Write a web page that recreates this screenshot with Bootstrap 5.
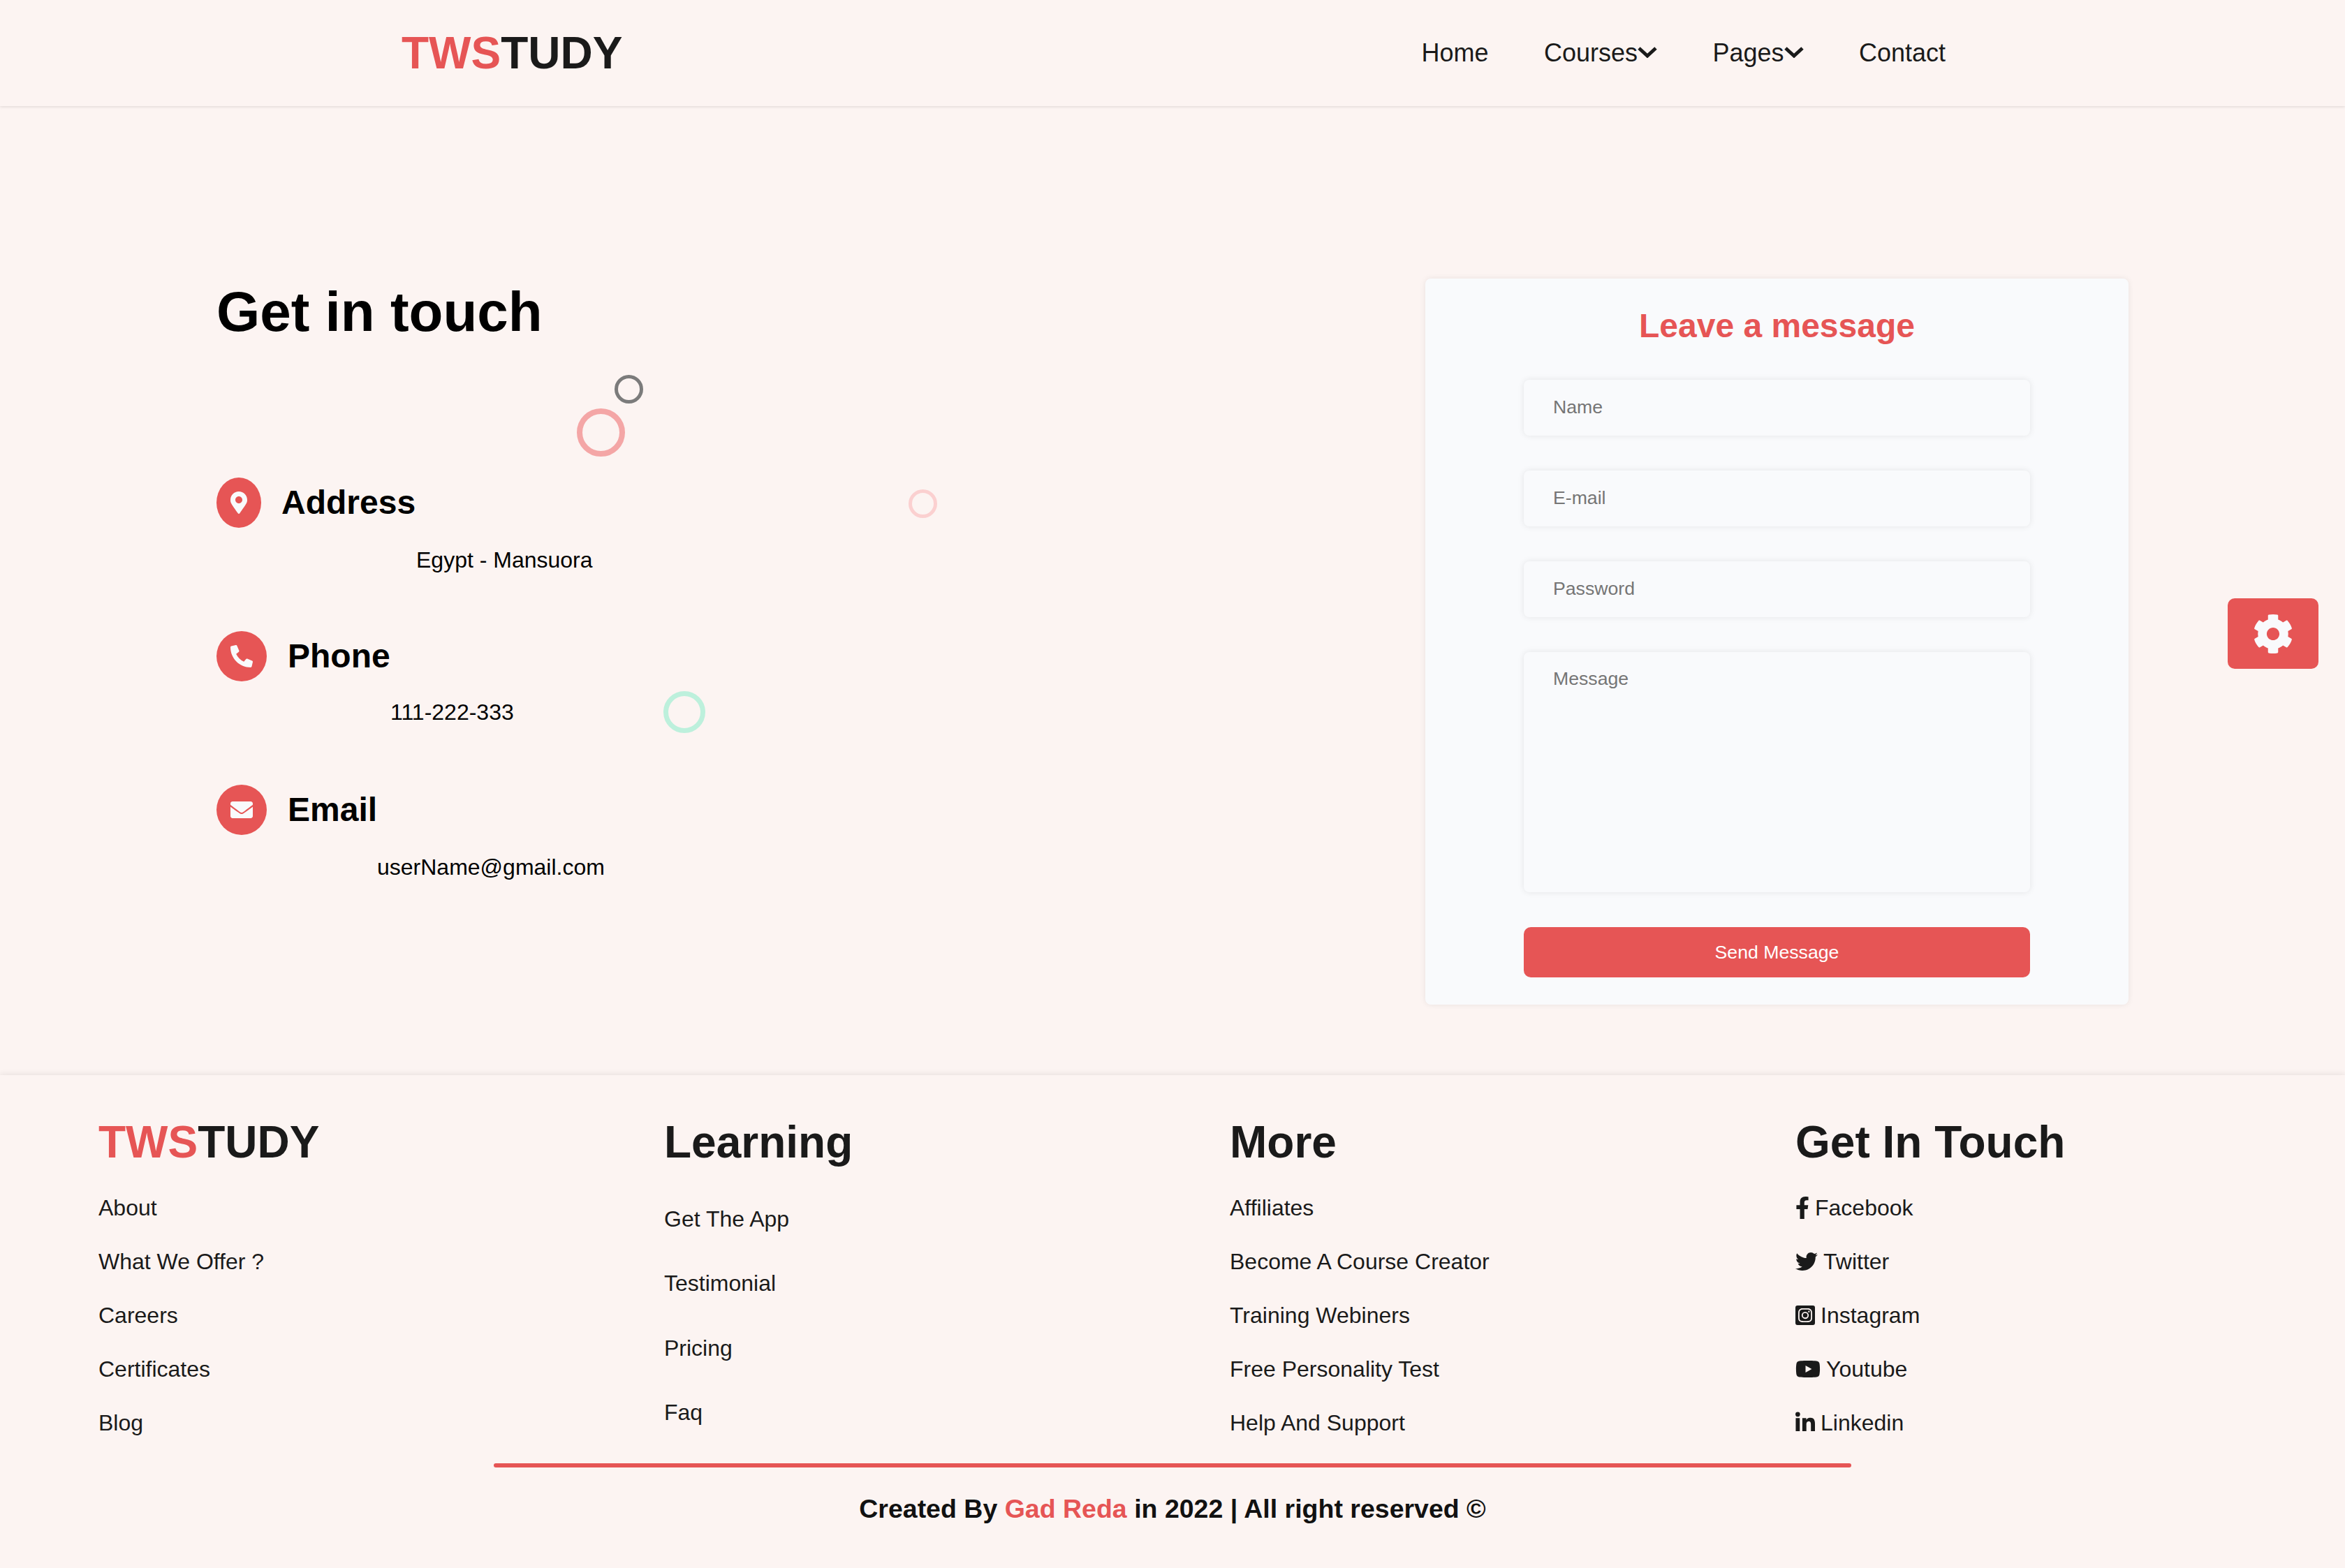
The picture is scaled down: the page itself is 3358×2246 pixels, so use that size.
<!DOCTYPE html>
<html lang="en">
<head>
    <meta charset="UTF-8">
    <meta name="viewport" content="width=device-width, initial-scale=1.0">
    <title>TWSTUDY - Contact</title>
    <link href="https://cdn.jsdelivr.net/npm/bootstrap@5.3.0/dist/css/bootstrap.min.css" rel="stylesheet">
    <style>
        body {
            font-family: "Liberation Sans", Arial, sans-serif;
            background-color: #fcf4f2;
            color: #1a1a1a;
            font-size: 32px;
            line-height: 1.5;
        }
        a { color: inherit; text-decoration: none; }
        ul { list-style: none; padding: 0; margin: 0; }
        .accent { color: #e65555; }

        /* header */
        .site-head {
            height: 152px;
            padding: 0 572px 0 575px;
            background-color: #fcf4f2;
            box-shadow: 0 1px 4px rgba(0, 0, 0, .12);
        }
        .site-logo {
            font-size: 64px;
            font-weight: 700;
            line-height: 1.2;
            color: #1a1a1a;
            padding: 0;
            margin: 0;
        }
        .site-logo:hover { color: #1a1a1a; }
        .head-links { gap: 79.4px; font-size: 36px; }
        .head-links .nav-link { padding: 0; color: #1a1a1a; display: flex; align-items: center; }
        .head-chev { width: 28px; height: 16px; margin-top: -3px; }

        /* contact */
        .contact-area {
            padding: 247px 310px 101px 310px;
        }
        .touch-title { font-size: 80px; font-weight: 700; line-height: 1.2; color: #000; margin: 0 0 189px; }
        .info-item { margin-bottom: 78px; color: #000; }
        .info-item.item-phone { margin-bottom: 80px; }
        .info-head { gap: 29px; }
        .info-head.head-wide { gap: 30px; }
        .info-head h3 { font-size: 48px; font-weight: 700; line-height: 1.2; margin: 0; }
        .info-dot {
            padding: 20px;
            border-radius: 50%;
            background-color: #e65555;
        }
        .info-dot svg { display: block; height: 32px; fill: #f9fafc; }
        .info-text { margin: 22px 0 0; }
        .offset-addr { padding-left: 286px; }
        .info-text.offset-phone { padding-left: 249px; margin-top: 20px; }
        .offset-mail { padding-left: 230px; }

        .ring { position: absolute; border-style: solid; border-radius: 50%; }
        .ring-gray { left: 880px; top: 385px; width: 41px; height: 41px; border-width: 5px; border-color: #7b7b7b; }
        .ring-rose { left: 826px; top: 433px; width: 69px; height: 69px; border-width: 8px; border-color: #f4a6a6; }
        .ring-pale { left: 1301px; top: 549px; width: 41px; height: 41px; border-width: 5px; border-color: #fbd0d0; }
        .ring-mint { left: 950px; top: 838px; width: 60px; height: 60px; border-width: 7px; border-color: #bdf0dc; }

        .msg-card {
            width: 1007px;
            background-color: #f9fafc;
            border: 0;
            border-radius: 8px;
            box-shadow: 0 0 8px rgba(0, 0, 0, .08);
        }
        .msg-card .card-body { padding: 39px 141px; }
        .msg-title { font-size: 48px; font-weight: 700; line-height: 1.2; margin: 0 0 48px; }
        .msg-field {
            height: 80px;
            margin-bottom: 50px;
            padding: 0 42px;
            font-size: 26.67px;
            background-color: #f9fafc;
            border: 0;
            border-radius: 8px;
            box-shadow: 0 0 10px rgba(0, 0, 0, .09);
        }
        .msg-field::placeholder { color: #757575; opacity: 1; }
        textarea.msg-field { height: 344px; padding: 22px 42px; resize: none; min-height: 0; line-height: 1.2; }
        .msg-send {
            display: block;
            width: 100%;
            height: 72px;
            padding: 0;
            font-size: 26.67px;
            color: #fff;
            background-color: #e65555;
            border: 0;
            border-radius: 10px;
        }
        .gear-btn {
            position: fixed;
            top: 857px;
            right: 38px;
            width: 130px;
            height: 101px;
            background-color: #e65555;
            border-radius: 10px;
        }
        .gear-btn svg { width: 58px; height: 58px; fill: #f9fafc; }

        /* footer */
        .site-foot {
            padding: 58px 0 0;
            height: 706px;
            box-shadow: 0 -2px 8px rgba(0, 0, 0, .08);
        }
        .foot-cols {
            display: grid;
            grid-template-columns: repeat(4, 1fr);
            column-gap: 165px;
            padding: 0 142px 0 141px;
        }
        .foot-cols h2 { font-size: 64px; font-weight: 700; line-height: 1.2; margin: 0 0 32px; }
        .foot-list li { margin-bottom: 28.8px; }
        .foot-list a { display: flex; align-items: center; gap: 8px; }
        .foot-list svg { height: 32px; fill: #1a1a1a; flex: none; }
        .foot-wide { padding-top: 15.5px; }
        .foot-wide li { margin-bottom: 44.5px; }
        .foot-rule {
            height: 6px;
            margin: 4px 707px 0;
            background-color: #e65555;
            border-radius: 3px;
            opacity: 1;
            border: 0;
        }
        .foot-note { font-size: 37.5px; font-weight: 700; margin: 0; padding-top: 31px; color: #111; }
    </style>
</head>
<body>
    <nav class="navbar site-head d-flex justify-content-between align-items-center">
        <a class="navbar-brand site-logo" href="#"><span class="accent">TWS</span>TUDY</a>
        <ul class="navbar-nav flex-row head-links">
            <li class="nav-item"><a class="nav-link" href="#">Home</a></li>
            <li class="nav-item"><a class="nav-link" href="#">Courses<svg class="head-chev" viewBox="0 0 28 16"><path d="M2 2l12 11L26 2" fill="none" stroke="#1a1a1a" stroke-width="5"/></svg></a></li>
            <li class="nav-item"><a class="nav-link" href="#">Pages<svg class="head-chev" viewBox="0 0 28 16"><path d="M2 2l12 11L26 2" fill="none" stroke="#1a1a1a" stroke-width="5"/></svg></a></li>
            <li class="nav-item"><a class="nav-link" href="#">Contact</a></li>
        </ul>
    </nav>

    <main class="contact-area position-relative d-flex justify-content-between align-items-start">
        <span class="ring ring-gray"></span>
        <span class="ring ring-rose"></span>
        <span class="ring ring-pale"></span>
        <span class="ring ring-mint"></span>

        <section>
            <h1 class="touch-title">Get in touch</h1>

            <div class="info-item">
                <div class="info-head d-flex align-items-center">
                    <span class="info-dot"><svg viewBox="0 0 384 512"><path d="M172.268 501.67C26.97 291.031 0 268.413 0 192 0 85.961 85.961 0 192 0s192 85.961 192 192c0 76.413-26.97 99.031-172.268 309.67-9.535 13.774-29.93 13.773-39.464 0zM192 272c44.183 0 80-35.817 80-80s-35.817-80-80-80-80 35.817-80 80 35.817 80 80 80z"/></svg></span>
                    <h3>Address</h3>
                </div>
                <p class="info-text offset-addr">Egypt - Mansuora</p>
            </div>

            <div class="info-item item-phone">
                <div class="info-head head-wide d-flex align-items-center">
                    <span class="info-dot"><svg viewBox="0 0 512 512"><path d="M497.39 361.8l-112-48a24 24 0 0 0-28 6.9l-49.6 60.6A370.66 370.66 0 0 1 130.6 204.11l60.6-49.6a23.94 23.94 0 0 0 6.9-28l-48-112A24.16 24.16 0 0 0 122.6.61l-104 24A24 24 0 0 0 0 48c0 256.5 207.9 464 464 464a24 24 0 0 0 23.4-18.6l24-104a24.29 24.29 0 0 0-14.01-27.6z"/></svg></span>
                    <h3>Phone</h3>
                </div>
                <p class="info-text offset-phone">111-222-333</p>
            </div>

            <div class="info-item">
                <div class="info-head head-wide d-flex align-items-center">
                    <span class="info-dot"><svg viewBox="0 0 512 512"><path d="M502.3 190.8c3.9-3.1 9.7-.2 9.7 4.7V400c0 26.5-21.5 48-48 48H48c-26.5 0-48-21.5-48-48V195.6c0-5 5.7-7.8 9.7-4.7 22.4 17.4 52.1 39.5 154.1 113.6 21.1 15.4 56.7 47.8 92.2 47.6 35.7.3 72-32.8 92.3-47.6 102-74.1 131.6-96.3 154-113.7zM256 320c23.2.4 56.6-29.2 73.4-41.4 132.7-96.3 142.8-104.7 173.4-128.7 5.8-4.5 9.2-11.5 9.2-18.9v-19c0-26.5-21.5-48-48-48H48C21.5 64 0 85.5 0 112v19c0 7.4 3.4 14.3 9.2 18.9 30.6 23.9 40.7 32.4 173.4 128.7 16.8 12.2 50.2 41.8 73.4 41.4z"/></svg></span>
                    <h3>Email</h3>
                </div>
                <p class="info-text offset-mail">userName@gmail.com</p>
            </div>
        </section>

        <div class="card msg-card">
            <form class="card-body">
                <h2 class="msg-title accent text-center">Leave a message</h2>
                <input class="form-control msg-field" type="text" placeholder="Name">
                <input class="form-control msg-field" type="email" placeholder="E-mail">
                <input class="form-control msg-field" type="password" placeholder="Password">
                <textarea class="form-control msg-field" placeholder="Message"></textarea>
                <button class="btn msg-send" type="button">Send Message</button>
            </form>
        </div>
    </main>

    <a class="gear-btn d-flex align-items-center justify-content-center" href="#"><svg viewBox="0 0 512 512"><path d="M487.4 315.7l-42.6-24.6c4.3-23.2 4.3-47 0-70.2l42.6-24.6c4.9-2.8 7.1-8.6 5.5-14-11.1-35.6-30-67.8-54.7-94.6-3.8-4.1-10-5.1-14.8-2.3L380.8 110c-17.9-15.4-38.5-27.3-60.8-35.1V25.8c0-5.6-3.9-10.5-9.4-11.7-36.7-8.2-74.3-7.8-109.2 0-5.5 1.2-9.4 6.1-9.4 11.7V75c-22.2 7.9-42.8 19.8-60.8 35.1L88.7 85.5c-4.9-2.8-11-1.9-14.8 2.3-24.7 26.7-43.6 58.9-54.7 94.6-1.7 5.4.6 11.2 5.5 14L67.3 221c-4.3 23.2-4.3 47 0 70.2l-42.6 24.6c-4.9 2.8-7.1 8.6-5.5 14 11.1 35.6 30 67.8 54.7 94.6 3.8 4.1 10 5.1 14.8 2.3l42.6-24.6c17.9 15.4 38.5 27.3 60.8 35.1v49.2c0 5.6 3.9 10.5 9.4 11.7 36.7 8.2 74.3 7.8 109.2 0 5.5-1.2 9.4-6.1 9.4-11.7v-49.2c22.2-7.9 42.8-19.8 60.8-35.1l42.6 24.6c4.9 2.8 11 1.9 14.8-2.3 24.7-26.7 43.6-58.9 54.7-94.6 1.5-5.5-.7-11.3-5.6-14.1zM256 336c-44.1 0-80-35.9-80-80s35.9-80 80-80 80 35.9 80 80-35.9 80-80 80z"/></svg></a>

    <footer class="site-foot">
        <div class="foot-cols">
            <div>
                <h2><span class="accent">TWS</span>TUDY</h2>
                <ul class="foot-list">
                    <li><a href="#">About</a></li>
                    <li><a href="#">What We Offer ?</a></li>
                    <li><a href="#">Careers</a></li>
                    <li><a href="#">Certificates</a></li>
                    <li><a href="#">Blog</a></li>
                </ul>
            </div>
            <div>
                <h2>Learning</h2>
                <ul class="foot-list foot-wide">
                    <li><a href="#">Get The App</a></li>
                    <li><a href="#">Testimonial</a></li>
                    <li><a href="#">Pricing</a></li>
                    <li><a href="#">Faq</a></li>
                </ul>
            </div>
            <div>
                <h2>More</h2>
                <ul class="foot-list">
                    <li><a href="#">Affiliates</a></li>
                    <li><a href="#">Become A Course Creator</a></li>
                    <li><a href="#">Training Webiners</a></li>
                    <li><a href="#">Free Personality Test</a></li>
                    <li><a href="#">Help And Support</a></li>
                </ul>
            </div>
            <div>
                <h2>Get In Touch</h2>
                <ul class="foot-list">
                    <li><a href="#"><svg viewBox="0 0 320 512"><path d="M279.14 288l14.22-92.66h-88.91v-60.13c0-25.35 12.42-50.06 52.24-50.06h40.42V6.26S260.43 0 225.36 0c-73.22 0-121.08 44.38-121.08 124.72v70.62H22.89V288h81.39v224h100.17V288z"/></svg>Facebook</a></li>
                    <li><a href="#"><svg viewBox="0 0 512 512"><path d="M459.37 151.716c.325 4.548.325 9.097.325 13.645 0 138.72-105.583 298.558-298.558 298.558-59.452 0-114.68-17.219-161.137-47.106 8.447.974 16.568 1.299 25.34 1.299 49.055 0 94.213-16.568 130.274-44.832-46.132-.975-84.792-31.188-98.112-72.772 6.498.974 12.995 1.624 19.818 1.624 9.421 0 18.843-1.3 27.614-3.573-48.081-9.747-84.143-51.98-84.143-102.985v-1.299c13.969 7.797 30.214 12.67 47.431 13.319-28.264-18.843-46.781-51.005-46.781-87.391 0-19.492 5.197-37.36 14.294-52.954 51.655 63.675 129.3 105.258 216.365 109.807-1.624-7.797-2.599-15.918-2.599-24.04 0-57.828 46.782-104.934 104.934-104.934 30.213 0 57.502 12.67 76.67 33.137 23.715-4.548 46.456-13.32 66.599-25.34-7.798 24.366-24.366 44.833-46.132 57.827 21.117-2.273 41.584-8.122 60.426-16.243-14.292 20.791-32.161 39.308-52.628 54.253z"/></svg>Twitter</a></li>
                    <li><a href="#"><svg viewBox="0 0 448 512"><path d="M224,202.66A53.34,53.34,0,1,0,277.36,256,53.38,53.38,0,0,0,224,202.66Zm124.71-41a54,54,0,0,0-30.41-30.41c-21-8.29-71-6.43-94.3-6.43s-73.25-1.93-94.31,6.43a54,54,0,0,0-30.41,30.41c-8.28,21-6.43,71.05-6.43,94.33S91,329.26,99.32,350.33a54,54,0,0,0,30.41,30.41c21,8.29,71,6.43,94.31,6.43s73.24,1.93,94.3-6.43a54,54,0,0,0,30.41-30.41c8.35-21,6.43-71.05,6.43-94.33S357.1,182.74,348.75,161.67ZM224,338a82,82,0,1,1,82-82A81.9,81.9,0,0,1,224,338Zm85.38-148.3a19.14,19.14,0,1,1,19.13-19.14A19.1,19.1,0,0,1,309.42,189.74ZM400,32H48A48,48,0,0,0,0,80V432a48,48,0,0,0,48,48H400a48,48,0,0,0,48-48V80A48,48,0,0,0,400,32ZM382.88,322c-1.29,25.63-7.14,48.34-25.85,67s-41.4,24.63-67,25.85c-26.41,1.49-105.59,1.49-132,0-25.63-1.29-48.26-7.15-67-25.85s-24.63-41.42-25.85-67c-1.49-26.42-1.49-105.61,0-132,1.29-25.63,7.07-48.34,25.85-67s41.47-24.56,67-25.78c26.41-1.49,105.59-1.49,132,0,25.63,1.29,48.33,7.15,67,25.85s24.63,41.42,25.85,67.05C384.37,216.44,384.37,295.56,382.88,322Z"/></svg>Instagram</a></li>
                    <li><a href="#"><svg viewBox="0 0 576 512"><path d="M549.655 124.083c-6.281-23.65-24.787-42.276-48.284-48.597C458.781 64 288 64 288 64S117.22 64 74.629 75.486c-23.497 6.322-42.003 24.947-48.284 48.597-11.412 42.867-11.412 132.305-11.412 132.305s0 89.438 11.412 132.305c6.281 23.65 24.787 41.5 48.284 47.821C117.22 448 288 448 288 448s170.78 0 213.371-11.486c23.497-6.321 42.003-24.171 48.284-47.821 11.412-42.867 11.412-132.305 11.412-132.305s0-89.438-11.412-132.305zm-317.51 213.508V175.185l142.739 81.205-142.739 81.201z"/></svg>Youtube</a></li>
                    <li><a href="#"><svg viewBox="0 0 448 512"><path d="M100.28 448H7.4V148.9h92.88zM53.79 117.1C24.09 117.1 0 92.5 0 62.8a53.79 53.79 0 0 1 107.58 0c0 29.7-24.1 54.3-53.79 54.3zM447.9 448h-92.68V302.4c0-34.7-.7-79.2-48.29-79.2-48.29 0-55.69 37.7-55.69 76.7V448h-92.78V148.9h89.08v40.8h1.3c12.4-23.5 42.69-48.3 87.88-48.3 94 0 111.28 61.9 111.28 142.3V448z"/></svg>Linkedin</a></li>
                </ul>
            </div>
        </div>
        <hr class="foot-rule">
        <p class="foot-note text-center">Created By <span class="accent">Gad Reda</span> in 2022 | All right reserved ©</p>
    </footer>

    <script src="https://cdn.jsdelivr.net/npm/bootstrap@5.3.0/dist/js/bootstrap.bundle.min.js"></script>
</body>
</html>
